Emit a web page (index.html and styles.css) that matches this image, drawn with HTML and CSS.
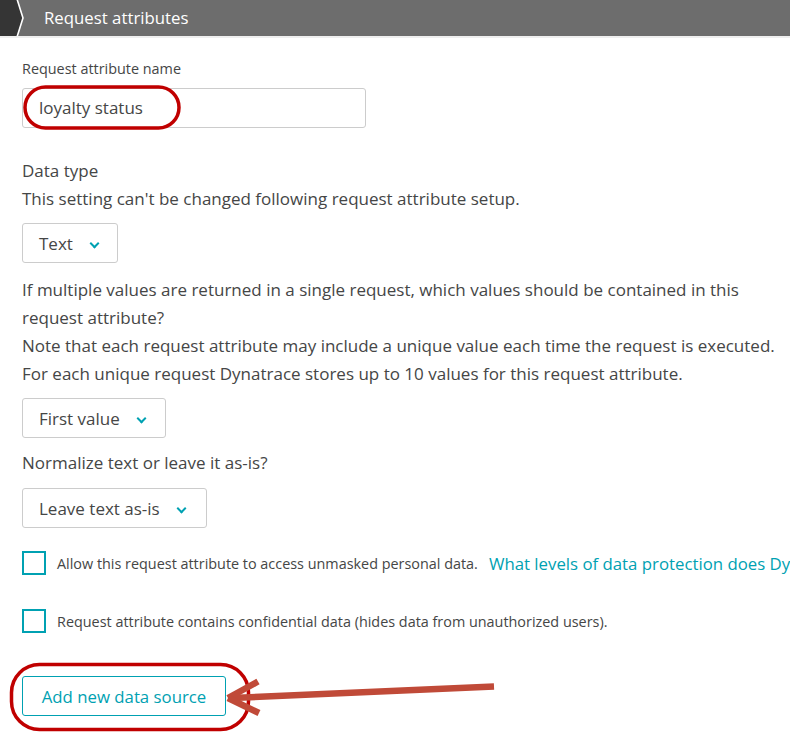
FILE: index.html
```html
<!DOCTYPE html>
<html>
<head>
<meta charset="utf-8">
<link rel="stylesheet" href="styles.css">
</head>
<body>
<div class="page">
  <header class="bar">
    <svg class="crumb" width="26" height="36" viewBox="0 0 26 36">
      <polygon points="0,0 17,0 23,18 17,36 0,36" fill="#353535"/>
      <polyline points="17,-1 23,18 17,37" fill="none" stroke="#ffffff" stroke-width="1.6"/>
    </svg>
    <span class="bar-title">Request attributes</span>
  </header>

  <main class="form">
    <div class="label">Request attribute name</div>
    <div class="input">loyalty status</div>

    <div class="text first-text">Data type</div>
    <div class="text">This setting can't be changed following request attribute setup.</div>
    <div class="select sel-type"><span>Text</span><span class="chev"></span></div>

    <div class="text para">If multiple values are returned in a single request, which values should be contained in this<br>request attribute?<br>Note that each request attribute may include a unique value each time the request is executed.<br>For each unique request Dynatrace stores up to 10 values for this request attribute.</div>
    <div class="select sel-first"><span>First value</span><span class="chev"></span></div>

    <div class="text norm">Normalize text or leave it as-is?</div>
    <div class="select sel-leave"><span>Leave text as-is</span><span class="chev"></span></div>

    <div class="check check-1">
      <span class="box"></span>
      <span class="check-text">Allow this request attribute to access unmasked personal data.</span>
      <a class="link">What levels of data protection does Dynatrace provide?</a>
    </div>
    <div class="check check-2">
      <span class="box"></span>
      <span class="check-text">Request attribute contains confidential data (hides data from unauthorized users).</span>
    </div>

    <div class="btn">Add new data source</div>
  </main>

  <svg class="marks" width="790" height="736" viewBox="0 0 790 736">
    <rect x="25" y="87" width="154" height="41" rx="20.5" fill="none" stroke="#c00000" stroke-width="3.5"/>
    <rect x="11.5" y="664.5" width="237" height="65" rx="28" fill="none" stroke="#c00000" stroke-width="3.5"/>
    <g stroke="#c04a38" stroke-width="6.5" fill="none" stroke-linecap="butt">
      <line x1="494" y1="686.5" x2="232" y2="698"/>
      <line x1="228" y1="698" x2="258" y2="681.5"/>
      <line x1="228" y1="698" x2="259" y2="713"/>
    </g>
  </svg>
</div>
</body>
</html>
```

FILE: styles.css
```css
* { box-sizing: border-box; }

html, body {
  margin: 0;
  padding: 0;
  background: #ffffff;
}

body {
  font-family: "Open Sans", "Lato", sans-serif;
  color: #454646;
  width: 790px;
  height: 736px;
  overflow: hidden;
}

.page {
  position: relative;
  width: 790px;
  height: 736px;
  overflow: hidden;
}

.bar {
  height: 38px;
  background: #6d6d6d;
  border-bottom: 2px solid #efefef;
  display: flex;
  align-items: center;
}

.crumb {
  display: block;
  flex: none;
  align-self: flex-start;
}

.bar-title {
  color: #ffffff;
  font-size: 16.8px;
  margin-left: 18px;
  margin-top: -1px;
}

.form {
  padding: 21px 0 0 22px;
  display: flex;
  flex-direction: column;
  align-items: flex-start;
}

.label {
  font-size: 14.4px;
  line-height: 20px;
  height: 20px;
  margin-bottom: 9px;
}

.input {
  width: 344px;
  height: 40px;
  border: 1px solid #cccccc;
  border-radius: 3px;
  font-size: 17px;
  line-height: 38px;
  padding-left: 16px;
}

.text {
  font-size: 17px;
  line-height: 28px;
  white-space: nowrap;
}

.first-text { margin-top: 29px; }

.select {
  height: 40px;
  margin-top: 10px;
  border: 1px solid #cccccc;
  border-radius: 3px;
  font-size: 17px;
  display: flex;
  align-items: center;
  padding: 0 18px 0 16px;
  gap: 18px;
}

.chev {
  width: 7px;
  height: 7px;
  border-right: 2px solid #00a1b2;
  border-bottom: 2px solid #00a1b2;
  transform: rotate(45deg);
  margin-top: 0;
}

.sel-type { width: 96px; }
.sel-first { width: 144px; }
.sel-leave { width: 185px; }

.para {
  margin-top: 13px;
}

.norm { margin-top: 11px; }
.sel-leave { margin-top: 11px; }

.check {
  display: flex;
  align-items: center;
  white-space: nowrap;
  height: 24px;
}

.check-1 { margin-top: 23px; }
.check-2 { margin-top: 34px; }

.box {
  width: 24px;
  height: 24px;
  border: 2px solid #00a1b2;
  flex: none;
}

.check-text {
  font-size: 14.4px;
  margin-left: 11px;
}

.link {
  color: #00a1b2;
  font-size: 16.8px;
  margin-left: 11px;
}

.btn {
  margin-top: 43px;
  width: 204px;
  height: 40px;
  border: 1px solid #00a1b2;
  border-radius: 3px;
  color: #00a1b2;
  font-size: 16.8px;
  display: flex;
  align-items: center;
  justify-content: center;
}

.marks {
  position: absolute;
  left: 0;
  top: 0;
  pointer-events: none;
}
```
